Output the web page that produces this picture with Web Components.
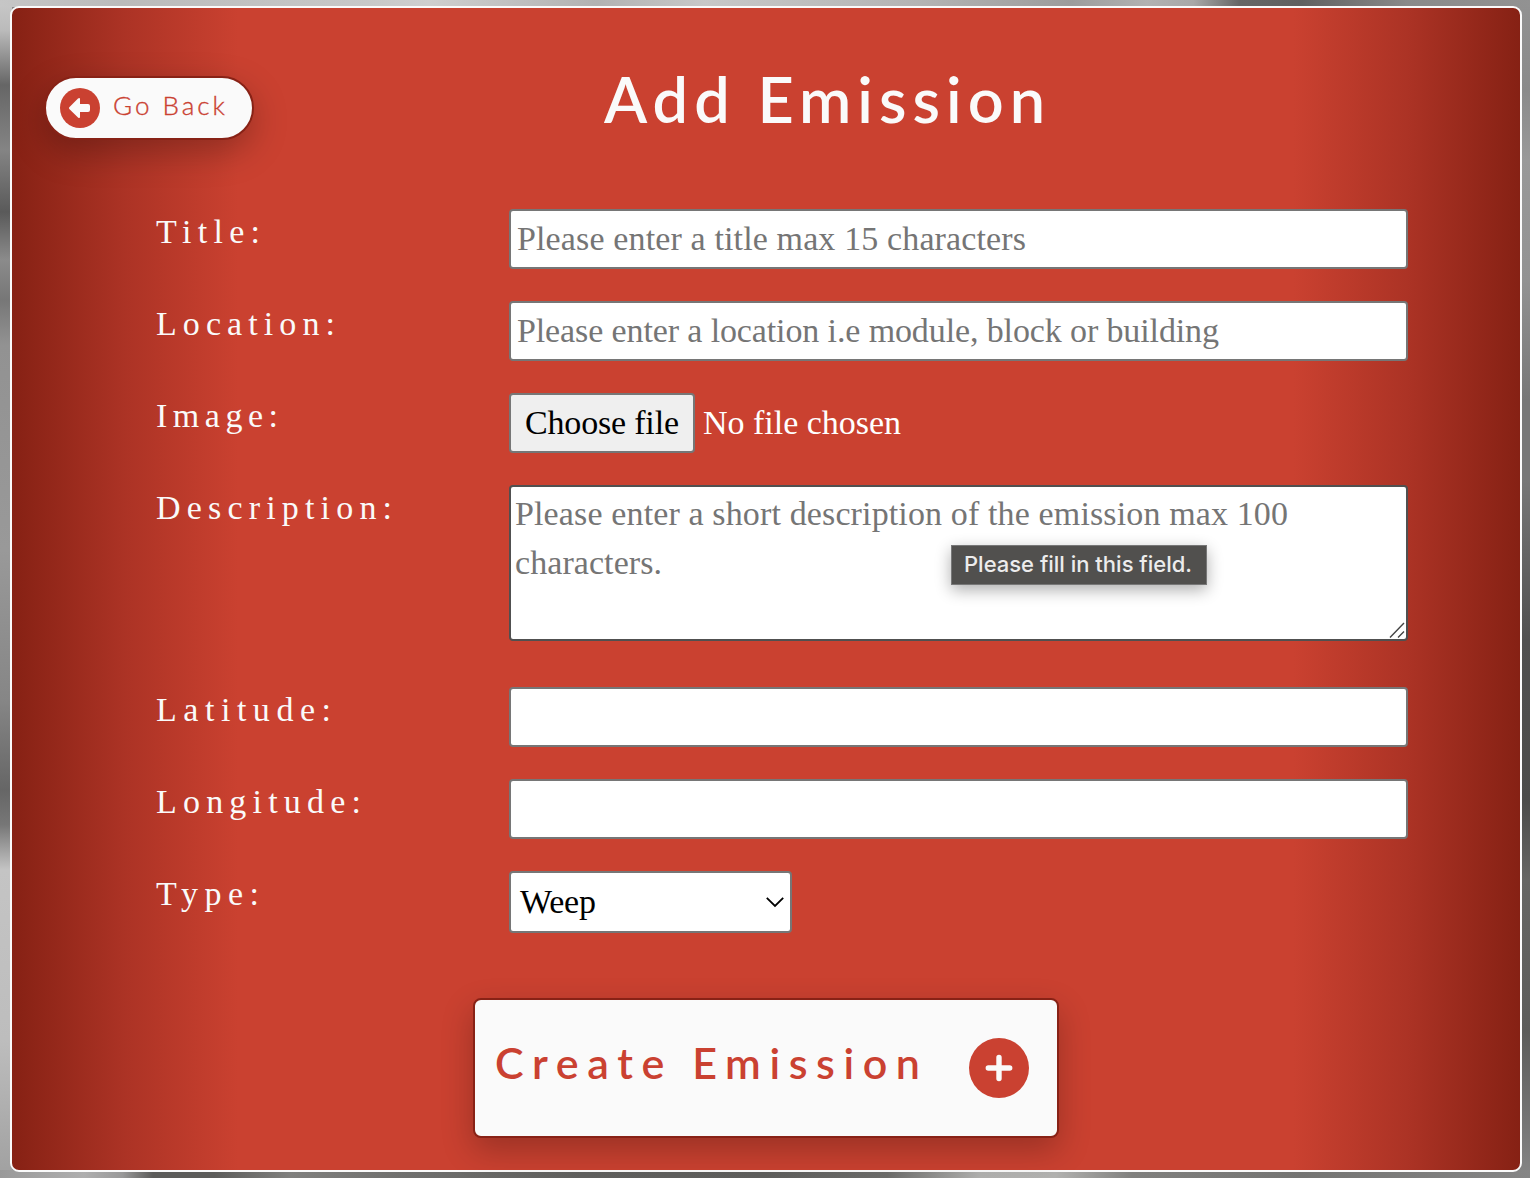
<!DOCTYPE html>
<html lang="en">
<head>
<meta charset="utf-8">
<title>Add Emission</title>
<style>
html,body{margin:0;height:100%;overflow:hidden}
</style>
</head>
<body>
<emission-page></emission-page>
<script>
const define = (name, html, setup) => {
  const t = document.createElement('template');
  t.innerHTML = html;
  customElements.define(name, class extends HTMLElement {
    connectedCallback() {
      if (this.shadowRoot) return;
      this.attachShadow({mode: 'open'}).append(t.content.cloneNode(true));
      if (setup) setup(this, this.shadowRoot);
    }
  });
};

// Text tracked so that the run of glyphs spans the width given in "w".
define('tracked-text', `<style>:host{display:block;white-space:pre}span{display:inline-block}</style><span><slot></slot></span>`, (el, root) => {
  const s = root.querySelector('span');
  const n = el.textContent.length;
  el.style.letterSpacing = '0px';
  const w = s.getBoundingClientRect().width;
  el.style.letterSpacing = ((+el.getAttribute('w') - w) / (n - 1)) + 'px';
});

define('circle-icon', `<style>
:host{display:block;flex:none;width:var(--size);height:var(--size)}
svg{display:block;width:100%;height:100%}
.plus,:host([kind=plus]) .arrow{display:none}
:host([kind=plus]) .plus{display:block}
</style>
<svg class="arrow" viewBox="0 0 40 40"><circle cx="20" cy="20" r="20" fill="#ca4131"/><path d="M9.3 19.2 18 10.6Q20 9.2 20 11.3V16H28Q30 16 30 18V22Q30 24 28 24H20V28.8Q20 31 18 29.5L9.3 20.9Q8.6 20 9.3 19.2Z" fill="#fafafa"/></svg>
<svg class="plus" viewBox="0 0 60 60"><circle cx="30" cy="30" r="30" fill="#ca4131"/><path d="M30 19.5V40.5M19.3 30H40.7" stroke="#fafafa" stroke-width="5.4" stroke-linecap="round"/></svg>`);

define('back-button', `<style>
:host{display:flex;box-sizing:border-box;width:210px;height:64px;border:2px solid #882216;border-radius:32px;background:#fafafa;padding:10px 14px;gap:13px;box-shadow:0 12px 34px rgba(0,0,0,.26);color:#ca4131;font:300 26px/34px Lato,sans-serif;-webkit-text-stroke:.35px #ca4131}
circle-icon{--size:40px}
</style><circle-icon></circle-icon><tracked-text w="112">Go Back</tracked-text>`);

define('form-row', `<style>
:host{display:flex;height:var(--h,92px);align-items:flex-start}
.label{width:353px;flex:none;color:#fafafa;font:34px/46px "Liberation Serif",serif}
</style><div class="label"><slot name="label"></slot></div><slot></slot>`);

define('text-box', `<style>
:host{display:block;box-sizing:border-box;width:899px;height:60px;border:2px solid #767676;border-radius:4px;background:#fff;color:#757575;padding:0 6px;font:34px/56px "Liberation Serif",serif}
:host([area]){height:156px;border-color:#505050;padding:3px 4px;line-height:48.5px;position:relative}
svg{display:none;position:absolute;right:1px;bottom:1px}
:host([area]) svg{display:block}
</style><slot></slot><svg width="16" height="16" viewBox="0 0 16 16" stroke="#444" stroke-width="1.4"><path d="M1 15.5 15 1M9 15.5 15 9.5"/></svg>`);

define('file-picker', `<style>
:host{display:flex;gap:8px;font:34px/56px "Liberation Serif",serif;color:#fff}
.b{box-sizing:border-box;width:186px;height:60px;border:2px solid #767676;border-radius:4px;background:#efefef;color:#000;padding-left:14px}
.n{padding-top:2px}
</style><div class="b"><tracked-text w="154">Choose file</tracked-text></div><tracked-text class="n" w="198">No file chosen</tracked-text>`);

define('select-box', `<style>
:host{display:flex;justify-content:space-between;align-items:center;box-sizing:border-box;width:283px;height:62px;border:2px solid #767676;border-radius:4px;background:#fff;color:#000;padding:0 5px 0 9px;font:34px/58px "Liberation Serif",serif}
</style><slot></slot><svg width="20" height="14" viewBox="0 0 20 14" fill="none" stroke="#000" stroke-width="1.8"><path d="M1.8 2.8 10 11 18.2 2.8"/></svg>`);

define('tool-tip', `<style>
:host{display:block;box-sizing:border-box;position:absolute;left:442px;top:60px;width:256px;height:40px;border:1px solid #777;background:#51504e;color:#ececec;padding-left:12px;font:500 22px/37px Inter,sans-serif;box-shadow:0 5px 16px rgba(0,0,0,.32)}
</style><slot></slot>`);

define('create-button', `<style>
:host{display:flex;box-sizing:border-box;width:586px;height:140px;border:2px solid #882216;border-radius:8px;background:#fafafa;padding:0 28px 0 20px;justify-content:space-between;align-items:center;box-shadow:0 12px 32px rgba(0,0,0,.24);color:#ca4131;font:600 43px/60px Lato,sans-serif}
circle-icon{--size:60px;margin-top:-1px}
tracked-text{margin-top:-10px}
</style><tracked-text w="425">Create Emission</tracked-text><circle-icon kind="plus"></circle-icon>`);

define('emission-page', `<style>
:host{display:block;box-sizing:border-box;width:1530px;height:1178px;padding:6px 8px 6px 10px;
background:
linear-gradient(90deg,#c6c6c6,#bbb 8%,#c8c8c8 24%,#cfcfcf 28%,#b2b2b2 39%,#c8c8c8 46%,#b4b4b4 60%,#9c9c9c 70%,#b2b2b2 75%,#a8a8a8 78%,#666 81%,#606060 85%,#8a8a8a 92%,#929292) 0 0/1530px 7px no-repeat,
linear-gradient(90deg,#999,#aeaeae 5.5%,#999 8%,#5c5c5a 10%,#5c5c5a 14%,#80807e 19%,#70706e 26%,#60605e 38%,#5e5e5c 50%,#6c6c6a 58%,#b0b0ae 64%,#b2b2b0 69%,#80807e 74%,#747472 85%,#858585) 0 1170px/1530px 8px no-repeat,
linear-gradient(#c8c8c8,#bbb 30px,#666 85px,#848484 150px,#5a5a5a 212px,#8b8b8b 260px,#777 300px,#929292 345px,#999 550px,#868686 700px,#666 790px,#777 825px,#c4c4c4 870px,#bdbdbd 1040px,#a0a0a0) 0 0/12px 1178px no-repeat,
linear-gradient(#929292,#8a8a8a 90px,#999 160px,#929292 280px,#777 400px,#777 480px,#505050 640px,#4c4c4a 800px,#666664 880px,#5c5c5a 1030px,#777 1130px,#858585) 100% 0/12px 1178px no-repeat,#888}
main{box-sizing:border-box;width:1512px;height:1166px;border:2px solid #fafafa;border-radius:9px;background:linear-gradient(90deg,#862114,#ac3325 7.5%,#ca4130 15%,#ca4130 85%,#ac3325 92.5%,#862114);display:flex;flex-direction:column}
header{display:flex;height:201px;padding:68px 0 0 32px;box-sizing:border-box;gap:350px}
h1{margin:-17px 0 0;color:#fafafa;font:600 63px/80px Lato,sans-serif}
.form{padding-left:144px}
.area{display:block;position:relative}
create-button{margin:35px 0 0 461px}
</style>
<main>
<header><back-button></back-button><h1><tracked-text w="441">Add Emission</tracked-text></h1></header>
<div class="form">
<form-row><tracked-text slot="label" w="104">Title:</tracked-text><text-box><tracked-text w="509">Please enter a title max 15 characters</tracked-text></text-box></form-row>
<form-row><tracked-text slot="label" w="179">Location:</tracked-text><text-box><tracked-text w="702">Please enter a location i.e module, block or building</tracked-text></text-box></form-row>
<form-row><tracked-text slot="label" w="122">Image:</tracked-text><file-picker></file-picker></form-row>
<form-row style="--h:202px"><tracked-text slot="label" w="236">Description:</tracked-text><div class="area"><text-box area><tracked-text w="773">Please enter a short description of the emission max 100</tracked-text><tracked-text w="147">characters.</tracked-text></text-box><tool-tip><tracked-text w="228">Please fill in this field.</tracked-text></tool-tip></div></form-row>
<form-row><tracked-text slot="label" w="175">Latitude:</tracked-text><text-box></text-box></form-row>
<form-row><tracked-text slot="label" w="205">Longitude:</tracked-text><text-box></text-box></form-row>
<form-row><tracked-text slot="label" w="103">Type:</tracked-text><select-box><tracked-text w="76">Weep</tracked-text></select-box></form-row>
</div>
<create-button></create-button>
</main>`);
</script>
</body>
</html>
